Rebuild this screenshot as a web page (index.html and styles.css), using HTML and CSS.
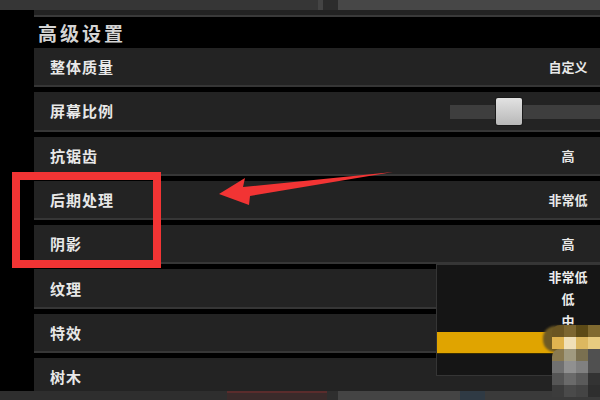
FILE: index.html
```html
<!DOCTYPE html>
<html lang="zh-CN">
<head>
<meta charset="utf-8">
<title>高级设置</title>
<link rel="stylesheet" href="styles.css">
</head>
<body>
<div class="page">
  <div class="top-strip">
    <div class="seg seg-a"></div>
    <div class="seg seg-line"></div>
    <div class="seg seg-dark"></div>
    <div class="seg seg-light"></div>
  </div>
  <div class="panel">
    <div class="panel-top"></div>
    <div class="title">高级设置</div>
    <div class="rows">
      <div class="row"><span class="label">整体质量</span><span class="value">自定义</span></div>
      <div class="row"><span class="label">屏幕比例</span><div class="slider"><div class="thumb"></div></div></div>
      <div class="row"><span class="label">抗锯齿</span><span class="value">高</span></div>
      <div class="row"><span class="label">后期处理</span><span class="value">非常低</span></div>
      <div class="row"><span class="label">阴影</span><span class="value">高</span></div>
      <div class="row"><span class="label">纹理</span></div>
      <div class="row"><span class="label">特效</span></div>
      <div class="row"><span class="label">树木</span></div>
    </div>
  </div>
  <div class="bottom-strip">
    <div class="seg b-a"></div>
    <div class="seg b-red"></div>
    <div class="seg b-mid"></div>
    <div class="seg b-light"></div>
    <div class="seg b-blue"></div>
    <div class="seg b-end"></div>
  </div>

  <div class="dropdown">
    <div class="item"><span class="item-text">非常低</span></div>
    <div class="item"><span class="item-text">低</span></div>
    <div class="item"><span class="item-text">中</span></div>
    <div class="item selected"></div>
  </div>

  <div class="blob"></div>
  <div class="mosaic">
    <i></i><i></i><i></i><i></i>
    <i></i><i></i><i></i><i></i>
    <i></i><i></i><i></i><i></i>
    <i></i><i></i><i></i><i></i>
    <i></i><i></i><i></i><i></i>
    <i></i><i></i><i></i><i></i>
  </div>

  <div class="red-box"></div>
  <svg class="arrow" width="600" height="400" viewBox="0 0 600 400">
    <polygon points="219,194 245,178 243,187 393,172 250,196 249,205" fill="#f23434"/>
  </svg>
</div>
</body>
</html>
```
FILE: styles.css
```css
* { box-sizing: border-box; }
html, body { margin: 0; padding: 0; }
body {
  background: #000;
  font-family: "Noto Sans CJK SC", "Noto Sans", sans-serif;
  font-weight: 700;
}
.page {
  position: relative;
  width: 600px;
  height: 400px;
  overflow: hidden;
  background: #000;
  display: flex;
  flex-direction: column;
}
.top-strip {
  height: 10px;
  display: flex;
  flex: none;
}
.seg { height: 100%; }
.seg-a { width: 318px; background: #363636; }
.seg-line { width: 5px; background: #444; }
.seg-dark { width: 15px; background: #2c2c2c; }
.seg-light { flex: 1; background: #474747; }

.panel {
  height: 381px;
  flex: none;
  padding-left: 34px;
  overflow: hidden;
}
.panel-top {
  height: 7px;
  background: #222;
  border-bottom: 2px solid #3a3a3a;
}
.title {
  height: 31px;
  padding-left: 4px;
  color: #d4d4d4;
  font-size: 19px;
  line-height: 32px;
  letter-spacing: 3px;
}
.rows {
  display: flex;
  flex-direction: column;
  gap: 5px;
}
.row {
  position: relative;
  height: 39.3px;
  flex: none;
  background: #232323;
  border-bottom: 2px solid #363636;
  display: flex;
  align-items: center;
  justify-content: space-between;
}
.label {
  padding-left: 16px;
  color: #e8e8e8;
  font-size: 15px;
  letter-spacing: 1px;
}
.value {
  width: 64px;
  text-align: center;
  color: #e8e8e8;
  font-size: 13px;
}
.slider {
  position: relative;
  width: 150px;
  height: 14px;
  margin-top: 2px;
  background: #3e3e3e;
}
.thumb {
  position: absolute;
  left: 46px;
  top: -7px;
  width: 26px;
  height: 27px;
  border-radius: 2px;
  background: linear-gradient(#e2e2e2, #b8b8b8);
  box-shadow: 0 0 0 1px #1a1a1a;
}

.bottom-strip {
  height: 9px;
  flex: none;
  display: flex;
}
.b-a { width: 227px; background: #2e2e2e; }
.b-red { width: 100px; background: #3a2a2a; border-top: 2px solid #5a2c2c; }
.b-mid { width: 11px; background: #2e2e2e; }
.b-light { width: 122px; background: #444; }
.b-blue { width: 25px; background: #2f3a44; }
.b-end { flex: 1; background: #3a3a3a; }

.dropdown {
  position: absolute;
  left: 436px;
  top: 264px;
  width: 164px;
  height: 112px;
  background: #151515;
  border: 1px solid #353535;
  border-right: none;
}
.item {
  height: 22.3px;
  display: flex;
  justify-content: flex-end;
  align-items: center;
}
.item-text {
  width: 64px;
  text-align: center;
  color: #ececec;
  font-size: 13px;
}
.item.selected {
  background: #e0a400;
  border-bottom: 1px solid #3a2e00;
}

.blob {
  position: absolute;
  left: 543px;
  top: 326px;
  width: 24px;
  height: 26px;
  border-radius: 12px 4px 4px 12px;
  background: #6e5a24;
  filter: blur(1px);
}
.mosaic {
  position: absolute;
  left: 552px;
  top: 325px;
  width: 48px;
  display: grid;
  grid-template-columns: repeat(4, 12px);
  grid-auto-rows: 12px;
  filter: blur(0.6px);
}
.mosaic i { display: block; }
.mosaic i:nth-child(1) { background: #6a5522; border-top-left-radius: 8px; }
.mosaic i:nth-child(2) { background: #7c6630; }
.mosaic i:nth-child(3) { background: #5c4a16; }
.mosaic i:nth-child(4) { background: #806a30; }
.mosaic i:nth-child(5) { background: #e0b450; }
.mosaic i:nth-child(6) { background: #f0e0b8; }
.mosaic i:nth-child(7) { background: #dcb860; }
.mosaic i:nth-child(8) { background: #e8cc80; }
.mosaic i:nth-child(9) { background: #8a7a50; border-top-left-radius: 8px; }
.mosaic i:nth-child(10) { background: #a09a80; }
.mosaic i:nth-child(11) { background: #7a7050; }
.mosaic i:nth-child(12) { background: #505050; }
.mosaic i:nth-child(13) { background: #707070; }
.mosaic i:nth-child(14) { background: #909090; }
.mosaic i:nth-child(15) { background: #808080; }
.mosaic i:nth-child(16) { background: #505050; }
.mosaic i:nth-child(17) { background: #555; }
.mosaic i:nth-child(18) { background: #6a6a6a; }
.mosaic i:nth-child(19) { background: #5a5a5a; }
.mosaic i:nth-child(20) { background: #333; }
.mosaic i:nth-child(21) { background: #3c3c3c; }
.mosaic i:nth-child(22) { background: #4a4a4a; }
.mosaic i:nth-child(23) { background: #444; }
.mosaic i:nth-child(24) { background: #2e2e2e; }

.red-box {
  position: absolute;
  left: 12px;
  top: 172px;
  width: 149px;
  height: 96px;
  border: 8px solid #f23434;
}
.arrow {
  position: absolute;
  left: 0;
  top: 0;
}
```
